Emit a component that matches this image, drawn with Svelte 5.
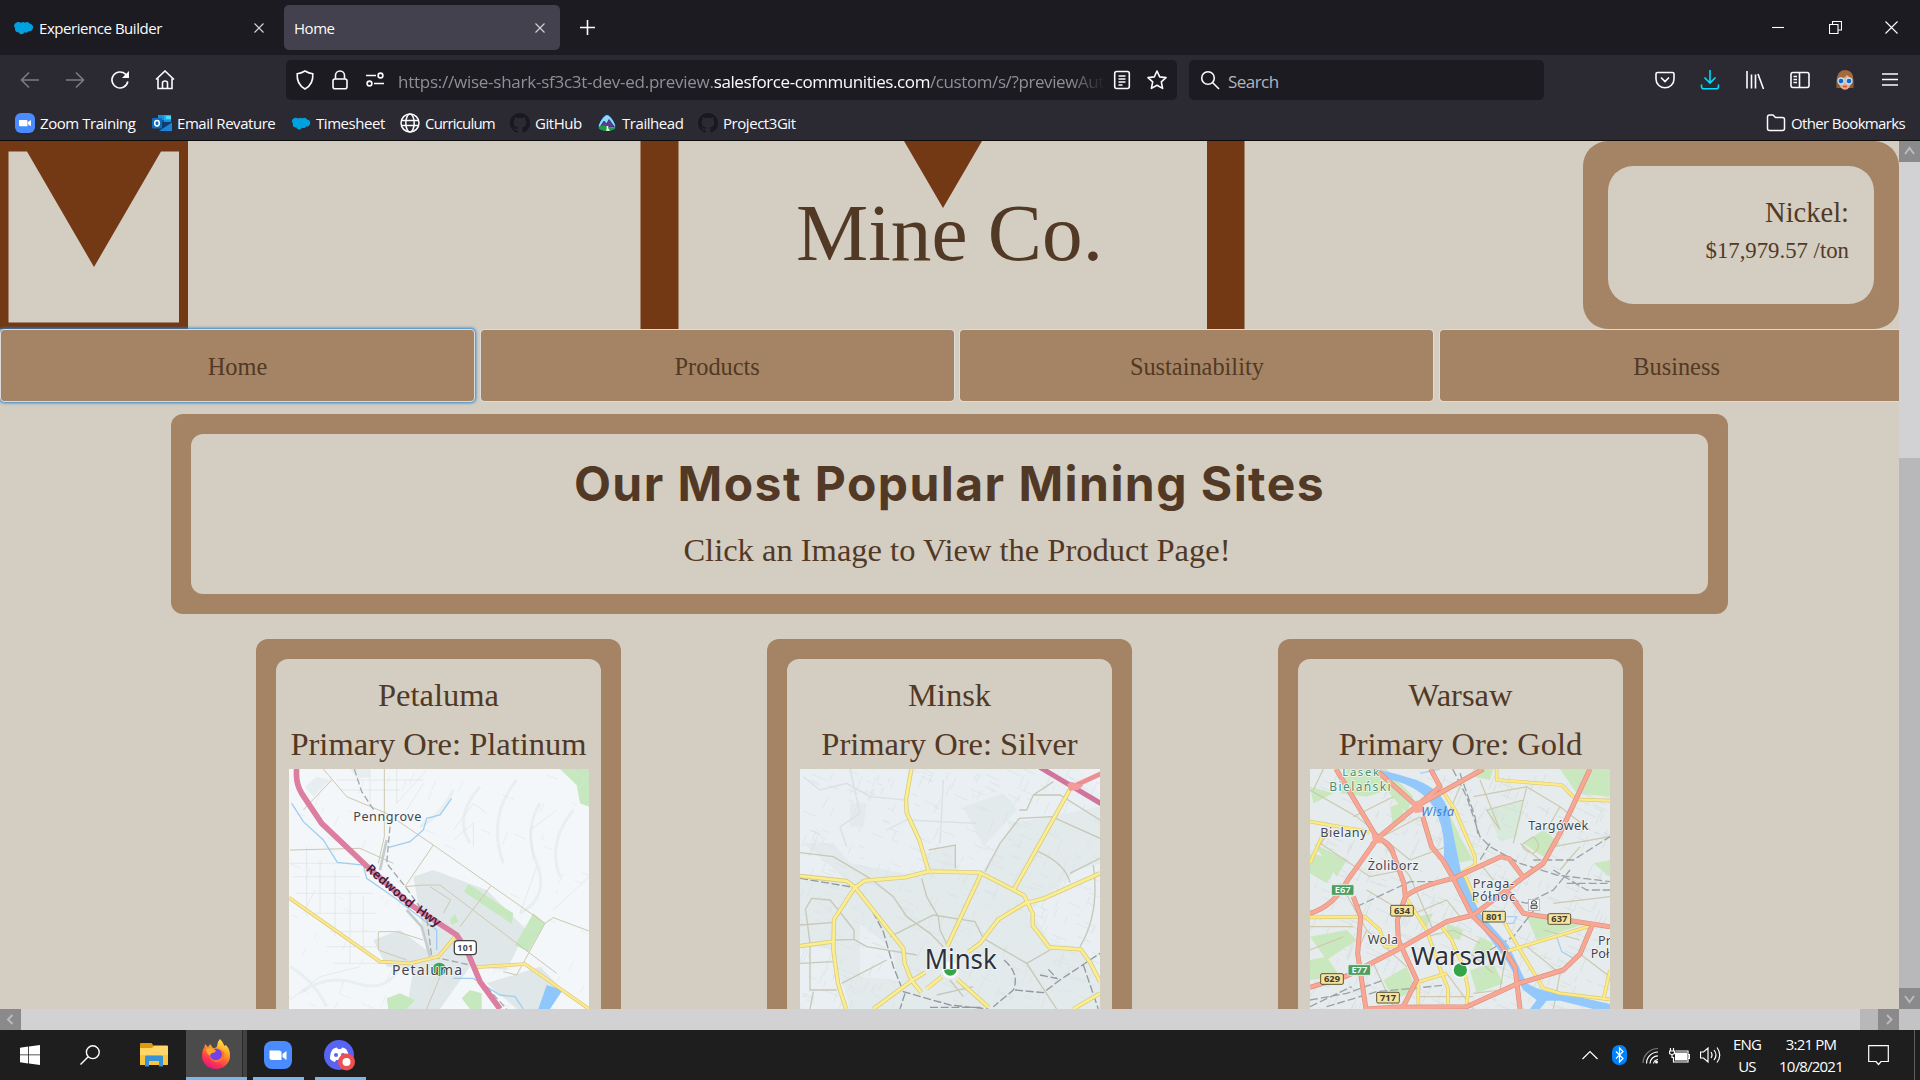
<script>
  const bookmarks = [
    { icon: 'zoom', label: 'Zoom Training' },
    { icon: 'outlook', label: 'Email Revature' },
    { icon: 'cloud', label: 'Timesheet' },
    { icon: 'globe', label: 'Curriculum' },
    { icon: 'github', label: 'GitHub' },
    { icon: 'trail', label: 'Trailhead' },
    { icon: 'github', label: 'Project3Git' },
  ];
  const nav = ['Home', 'Products', 'Sustainability', 'Business'];
  const sites = [
    { name: 'Petaluma', ore: 'Platinum', origin: 147 },
    { name: 'Minsk', ore: 'Silver', origin: 150 },
    { name: 'Warsaw', ore: 'Gold', origin: 150 },
  ];

  // Deterministic street texture: short, slightly irregular segments.
  function streets(seed, count, size) {
    let s = seed;
    const rnd = () => ((s = (s * 16807) % 2147483647) / 2147483647);
    let d = '';
    for (let i = 0; i < count; i++) {
      const x = 147 + rnd() * 900;
      const y = 417 + rnd() * 720;
      const a = rnd() > 0.5 ? 0.4 : 1.97;
      const l = size * (0.4 + rnd());
      d += `M${x.toFixed(0)} ${y.toFixed(0)}l${(Math.cos(a) * l).toFixed(0)} ${(Math.sin(a) * l).toFixed(0)}`;
    }
    return d;
  }

  const minskRoads = [
    'M484 417L468 510L470 548L508 630L536 724L690 728L822 796L848 850L848 886L898 952L992 958L1022 1000L1050 1055',
    'M150 738L290 753L315 772L345 752L465 742L536 724',
    'M315 772L252 868L250 960L264 1060L288 1137',
    'M150 948L252 934',
    'M315 772L460 955L464 1000L485 1052L514 1088',
    'M370 1137L485 1052L525 1028',
    'M693 732L592 948',
    'M655 966L690 940L745 868L825 820L880 806L1050 730',
    'M960 478L792 778',
    'M622 1048L716 1132',
    'M530 1076L576 1040',
    'M970 1137L1050 1090',
  ];
  const warsawRed = [
    'M228 417L352 625L262 752Q220 830 150 850',
    'M345 417L470 528L352 625',
    'M352 625Q395 640 400 672L432 760L436 800L412 870L415 930L470 1050L430 1130L320 1137',
    'M470 528L670 417M512 417L540 470L470 528',
    'M488 560L515 650L548 690L580 745L635 855L720 940L765 1010L780 1137',
    'M436 800Q470 770 580 745L722 680L748 686L790 742L740 780L640 855',
    'M990 417L900 610L850 700L790 742M740 780L790 850L1050 890',
    'M150 1072L260 1038L420 955L560 875L640 855',
    'M280 800L302 860L293 970L318 1137',
    'M1000 878L960 972L910 1020L770 1062L620 1130L420 1132',
  ];
  const warsawYellow = [
    'M150 575L330 606M190 610L150 700',
    'M710 417V450L905 465L948 508L1050 512',
    'M540 470L585 540L645 680V705L610 725L650 820',
    'M150 862L315 860L360 900L375 950H420',
    'M436 800L500 900L545 1030L564 1075V1137',
    'M545 890L575 930L610 1010L625 1080L618 1137',
    'M475 1056L560 1030M475 1056V1137',
    'M740 964L1000 885M735 880L780 960L850 1075L900 1090L1050 1108',
    'M1050 1020L1030 1110',
  ];
</script>

{#snippet cloud()}
  <path fill="#00a1e0" d="M8.3 4.2C9.2 3.2 11 2.8 12.4 4C14 2.5 17 3 17.8 5.4C20.5 5 22 8.3 20.6 10.9C19.6 12.7 18 13.2 16.6 12.8C15.8 14.5 13.6 15 12 14.1C10.8 16.8 6.8 16.7 5.9 13.9C3.2 14.2 1.4 12 2.2 9.7C.2 7.9 1 4.4 3.8 3.6C5.5 3 7.5 3.2 8.3 4.2Z" />
{/snippet}

{#snippet icon(name)}
  {#if name === 'zoom'}
    <svg viewBox="0 0 20 20"><rect width="20" height="20" rx="6" fill="#4a8cff" /><path fill="#fff" d="M4 7h7.2q1.3 0 1.3 1.3V13.300H5.300Q4 13.300 4 12ZM13 9l3-2.100v6.400l-3-2Z" /></svg>
  {:else if name === 'outlook'}
    <svg viewBox="0 0 20 20"><path fill="#1490df" d="M6 2h13v10H6z" /><path fill="#28a8ea" d="M12 2h7v5h-7z" /><path fill="#0a5aa8" d="M6 7h6v5H6z" /><path fill="#50d9ff" d="M14 3h5v3h-5z" /><path fill="#123b6d" d="M6 9l14 0v8H8z" /><path fill="#1a86d9" d="M7 18L20 9.500V18Z" /><rect y="5" width="10" height="10.500" rx="1" fill="#0f6cbd" /><ellipse cx="5" cy="10.200" rx="2.300" ry="2.700" fill="none" stroke="#fff" stroke-width="1.500" /></svg>
  {:else if name === 'cloud'}
    <svg viewBox="0 0 22 18">{@render cloud()}</svg>
  {:else if name === 'globe'}
    <svg viewBox="0 0 20 20" fill="none" stroke="#fbfbfe" stroke-width="1.500"><circle cx="10" cy="10" r="9" /><ellipse cx="10" cy="10" rx="4.200" ry="9" /><path d="M1.500 7.500h17M1.500 12.500h17" /></svg>
  {:else if name === 'github'}
    <svg viewBox="0 0 16 16"><path fill="#191820" d="M8 0C3.580 0 0 3.580 0 8c0 3.540 2.290 6.530 5.470 7.590.4.070.55-.17.55-.38 0-.19-.01-.82-.01-1.490-2.010.37-2.530-.49-2.690-.94-.09-.23-.48-.94-.82-1.130-.28-.15-.68-.52-.01-.53.63-.01 1.080.58 1.230.82.72 1.210 1.870.87 2.330.66.07-.52.28-.87.51-1.070-1.780-.2-3.640-.89-3.640-3.950 0-.87.31-1.590.82-2.150-.08-.2-.36-1.020.08-2.120 0 0 .67-.21 2.200.82a7.600 7.600 0 014 0c1.530-1.040 2.200-.82 2.200-.82.44 1.100.16 1.920.08 2.120.51.56.82 1.270.82 2.150 0 3.070-1.870 3.750-3.650 3.950.29.25.54.73.54 1.480 0 1.070-.01 1.930-.01 2.200 0 .21.15.46.55.38A8 8 0 0016 8c0-4.420-3.580-8-8-8z" /></svg>
  {:else}
    <svg viewBox="0 0 20 20"><path fill="#8fd8f8" stroke="#032d60" d="M10 1.500C13 1.500 19 10 18.800 14Q18 18 10 18T1.200 14C1 10 7 1.500 10 1.500Z" /><path fill="#5c3f92" stroke="#20124d" stroke-width=".6" d="M3 14L7 8l2.500 3L12 6.500 17.500 14Z" /><path fill="#1f9d3a" d="M1.500 14Q6 11.500 10 13.500T18.500 14Q17 18 10 18T1.500 14Z" /><path fill="#fff" d="M9.500 13l2 .3L11 15l2 2.800H9l.8-2.500Z" /></svg>
  {/if}
{/snippet}

{#snippet label(text, x, y, size, len)}
  <text {x} {y} font-size={size} textLength={len}>{text}</text>
{/snippet}

{#snippet shield(text, x, y, kind)}
  <rect class={kind} {x} {y} width="68" height="32" rx="4" />
  <text class="{kind}-text" x={x + 34} y={y + 26} text-anchor="middle">{text}</text>
{/snippet}

<div class="screen">
  <div class="tabs">
    <div class="tab">
      <svg class="fav" viewBox="0 0 22 18">{@render cloud()}</svg>
      <span class="tab-title">Experience Builder</span>
      <svg class="x" viewBox="0 0 10 10"><path d="M.5.500l9 9M9.500.500l-9 9" /></svg>
    </div>
    <div class="tab active">
      <span class="tab-title">Home</span>
      <svg class="x" viewBox="0 0 10 10"><path d="M.5.500l9 9M9.500.500l-9 9" /></svg>
    </div>
    <svg class="plus" viewBox="0 0 15 15"><path d="M7.500 0v15M0 7.500h15" /></svg>
    <div class="window-buttons">
      <svg viewBox="0 0 13 13"><path d="M0 6.500h12" /></svg>
      <svg viewBox="0 0 13 13"><path d="M.5 3.500h8.500v9H.5zM3.500 3.500V.5h9v8.500H9" /></svg>
      <svg viewBox="0 0 13 13"><path d="M.5.500l12 12M12.500.500l-12 12" /></svg>
    </div>
  </div>

  <div class="toolbar">
    <div class="nav-icons">
      <svg class="dim" viewBox="0 0 20 20"><path d="M19 10H1.500M9 2.500L1.500 10 9 17.500" /></svg>
      <svg class="dim" viewBox="0 0 20 20"><path d="M1 10h17.500M11 2.500l7.500 7.500-7.500 7.500" /></svg>
      <svg viewBox="0 0 20 20"><path d="M17.800 11.500A8 8 0 1 1 15.500 4.200L18 6.500" /><path fill="#fbfbfe" stroke="none" d="M19 1v7h-7Z" /></svg>
      <svg viewBox="0 0 20 20"><path d="M1 9.500L10 1l9 8.500M3 8.500V18.500H17V8.500M7.500 18V13q0-2 2.500-2t2.500 2v5" /></svg>
    </div>
    <div class="field url">
      <svg viewBox="0 0 20 20"><path d="M10 1q4 2.300 7.800 2.700c.5 7-1.800 12-7.800 15.300C4 15.700 1.700 10.700 2.200 3.700Q6 3.300 10 1Z" /></svg>
      <svg viewBox="0 0 20 20"><rect x="3" y="9" width="14" height="9.800" rx="2" /><path d="M5.500 9V5.500a4.500 4.500 0 0 1 9 0V9" /></svg>
      <svg viewBox="0 0 20 20"><path d="M1 5.500h10M9 13.500h10" /><circle cx="15.500" cy="5.500" r="2.400" /><circle cx="4.500" cy="13.500" r="2.400" /></svg>
      <div class="address"><span class="u1">https://wise-shark-sf3c3t-dev-ed.preview.</span><b>salesforce-communities.com</b><span>/custom/s/?previewAut</span></div>
      <svg viewBox="0 0 20 20"><rect x="2.700" y="1.500" width="14.600" height="17" rx="2" /><path d="M6.500 6h7M6.500 9h7M6.500 12h7M6.500 15h4" /></svg>
      <svg viewBox="0 0 20 20"><path stroke-linejoin="round" d="M10 1l2.700 5.900 6.300.7-4.700 4.300 1.300 6.500L10 15.200l-5.600 3.200 1.300-6.500L1 7.600l6.300-.7Z" /></svg>
    </div>
    <div class="field search">
      <svg viewBox="0 0 20 20"><circle cx="8" cy="8" r="6.300" /><path d="M12.500 12.500L19 19" /></svg>
      <span>Search</span>
    </div>
    <div class="actions">
      <svg viewBox="0 0 20 20"><path d="M2.500 2.500h15q1.500 0 1.500 1.500v5a9 8.800 0 0 1-18 0V4q0-1.500 1.500-1.500ZM6 7.500l4 4 4-4" /></svg>
      <svg class="download" viewBox="0 0 20 20"><path d="M10 0v12.500M4.500 7.500L10 13l5.500-5.500M1.500 14.500v2q0 2.300 2.300 2.300h12.400q2.300 0 2.300-2.300v-2" /></svg>
      <svg viewBox="0 0 20 20"><path d="M2 1v17.500M6.500 4.500v14M10.500 4.500v14M13 4l5.500 15" /></svg>
      <svg viewBox="0 0 20 20"><rect x="1" y="2.500" width="18" height="15" rx="2" /><path d="M9.500 2.500v15M3.500 6.500H7M3.500 9.500H7M3.500 12.500H7" /></svg>
      <svg viewBox="0 0 20 20"><g stroke="none"><path fill="#8e5b34" d="M1.500 18Q0 0 10 0T18.500 18H14V9H6v9Z" /><ellipse cx="10" cy="12" rx="6" ry="7.800" fill="#f0a887" /><path fill="#a46a3c" d="M2 10Q3 0 11 .5T18 10L12 5Q9 9 2 10Z" /></g><g fill="#1268c8" stroke="#b9e3ff" stroke-width="1.300"><circle cx="6" cy="11" r="3" /><circle cx="14" cy="11" r="3" /></g><path stroke="#c4553c" d="M8 16.500h4" /></svg>
      <svg viewBox="0 0 20 20"><path d="M2 4h16M2 9.500h16M2 15h16" /></svg>
    </div>
  </div>

  <div class="bookmarks">
    {#each bookmarks as b}
      <div class="bookmark {b.icon}">{@render icon(b.icon)}<span>{b.label}</span></div>
    {/each}
    <div class="bookmark other">
      <svg viewBox="0 0 20 20" fill="none" stroke="#fbfbfe" stroke-width="1.500"><path d="M1.500 4q0-2 2-2h3.500l2.500 2.500h7q2 0 2 2V15.500q0 2-2 2H3.500q-2 0-2-2Z" /></svg>
      <span>Other Bookmarks</span>
    </div>
  </div>

  <div class="viewport">
    <main class="page">
      <header>
        <svg class="logo" viewBox="0 0 188 188"><path fill="#733814" d="M0 0h188v188H0z" /><path fill="#d4cdc1" d="M8.500 10.500H27L94 126 161 10.500h18v171H8.500Z" /></svg>
        <div class="hero">
          <svg viewBox="0 0 605 188"><path fill="#733814" d="M.5 0h38v188H.5zM567 0h37.500v188h-37.500zM264 0h78L303 67Z" /></svg>
          <h1>Mine Co.</h1>
        </div>
        <div class="price">
          <div class="price-inner">
            <div class="metal">Nickel:</div>
            <div class="value">$17,979.57 /ton</div>
          </div>
        </div>
      </header>

      <nav>
        {#each nav as item, i}
          <button class:focused={i === 0}>{item}</button>
        {/each}
      </nav>

      <section class="banner">
        <div class="banner-inner">
          <h2>Our Most Popular Mining Sites</h2>
          <p>Click an Image to View the Product Page!</p>
        </div>
      </section>

      <div class="cards">
        {#each sites as site, i}
          <article>
            <div class="card-inner">
              <div>{site.name}</div>
              <div>Primary Ore: {site.ore}</div>
              <svg class="map" viewBox="{site.origin} 417 900 720">
                {#if i === 0}
                  <path fill="#f4f7f9" d="M147 417h900v720H147z" />
                  <path fill="none" stroke="#e9eef1" stroke-width="9" d="M640 480Q600 560 540 590M720 470Q640 560 690 640M830 450Q740 560 790 700M900 520Q850 600 890 700T840 850M1000 540Q920 640 960 740M180 1090Q260 1030 350 1060T480 1010M150 1010Q220 1050 260 1130" />
                  <path fill="#e0e7e9" d="M400 930L480 900L560 960L520 740L580 720L740 780L860 900L800 1020L690 1010L600 1137H500L520 1020L440 1010ZM740 1060L900 1010L960 1070L900 1137H830Z" />
                  <path fill="#e6eef0" d="M190 417h200v25L350 445L330 417ZM230 440L270 450L220 500L195 470Z" />
                  <path fill="#c6e8bf" d="M960 417h87V530L1020 520L1010 465ZM685 762L820 850L815 882L672 785ZM880 850L915 880L865 965L825 945ZM440 1105L480 1090L525 1110L500 1137H445ZM665 1105L690 1080L725 1090V1137H690ZM630 870L645 852L655 875L635 885Z" />
                  <g fill="none" stroke="#dfe2e2" stroke-width="2">
                    <path d="M150 700H330M160 740H360M170 790H400M220 850H410M270 905H410M260 950H415M280 1000H420M200 650V860M240 690V850M285 720V920M330 780V1000M370 800V960M225 780L190 850M290 450H550M300 480H480M390 420V530M470 417V520L560 420M500 540L550 460M640 600L700 520L740 550M700 650V580L640 630M880 690L870 600L950 540M890 710L840 850M940 840L1047 740M150 1110L240 1040L360 1010M560 1137L580 1050L640 1010" />
                    <path d={streets(41, 90, 32)} stroke-width="1.500" />
                  </g>
                  <g fill="none" stroke="#cdc8b2" stroke-width="3">
                    <path d="M250 417L320 500L440 550L580 645L915 880L830 1035L790 1025M433 417V620L415 700M580 645L495 770L550 765L600 765L870 970L950 1030M275 450L190 540M150 660L360 655L460 700M752 768L660 890M915 880L940 863L1047 903M415 905H470L550 930M415 905V960L500 990M570 770L632 810L610 850M560 1137L600 1040" />
                  </g>
                  <path fill="none" stroke="#9fcdf2" stroke-width="4" d="M155 520L190 575L250 630L292 697L370 705L380 745L460 800L590 900V960M446 652L510 635L550 600L560 565L600 555L635 505M640 1045L700 1045L780 1095L825 1100L850 1137" />
                  <path fill="#8dc7fb" d="M920 1065L968 1080L930 1137H895Z" />
                  <path fill="none" stroke="#a3aaab" stroke-width="4" d="M343 417L365 485L405 545M450 590L440 700L500 775L560 860L575 980L690 1005M720 1050L800 1137" stroke-dasharray="20 9" />
                  <path fill="none" stroke="#c5cccb" stroke-width="8" d="M440 630L420 720M500 840L545 890L570 980" />
                  <path fill="none" stroke="#dcc675" stroke-width="11" d="M147 803L420 995L510 1000L595 980L650 915M700 1012L855 1002L1047 1137" />
                  <path fill="none" stroke="#fbe98c" stroke-width="7" d="M147 803L420 995L510 1000L595 980L650 915M700 1012L855 1002L1047 1137" />
                  <path fill="none" stroke="#dd7da0" stroke-width="17" d="M170 417Q166 460 185 490L245 580L380 708L510 823L650 915L680 960L720 1055L780 1137" />
                  <circle cx="598" cy="1018" r="20" fill="#35a853" />
                  <rect x="643" y="932" width="66" height="42" rx="10" fill="#fff" stroke="#444" stroke-width="4" />
                  <text class="route" x="652" y="963" font-size="26" textLength="47">101</text>
                  {@render label('Penngrove', 340, 574, 38, 204)}
                  {@render label('Petaluma', 456, 1034, 42, 210)}
                  <text class="hwy" font-size="38" textLength="176" transform="translate(376 720) rotate(41)">Redwood</text>
                  <text class="hwy" font-size="38" textLength="80" transform="translate(526 846) rotate(35)">Hwy</text>
                {:else if i === 1}
                  <path fill="#e9eff2" d="M150 417h900v720H150z" />
                  <path fill="#e2eaec" d="M160 640L250 640L300 700L520 740L530 670L615 645L620 720L700 720L790 580L1050 530V700L980 720L830 850L990 960L1050 1040V1137H300L250 960L150 940V750L290 750ZM640 530L760 490L800 540L700 650ZM300 520L350 520L340 590L300 590Z" />
                  <path fill="#e9eff2" d="M850 850L980 720L1030 780L990 950L900 940ZM330 880L430 960L440 1050L330 1040Z" />
                  <path fill="#f1f0f7" d="M990 417h60v75Z" />
                  <g fill="none" stroke="#d9e1e3" stroke-width="2">
                    <path d={streets(93, 430, 34)} />
                    <path d="M160 440L210 480L290 460L360 500L470 510M580 450L570 640M300 417L330 550L270 590L290 650M410 600L470 570L680 580" stroke-width="4" />
                  </g>
                  <path fill="none" stroke="#c8c8b8" stroke-width="4" d="M150 668L250 680L360 745L430 800L470 860L540 910L580 950M420 920L500 880L550 855L675 875L700 925L830 1000L920 1137M705 725L750 640L808 565L905 560L1050 625M808 540H830L850 495L910 455M850 495H930L1050 570M515 745L530 800L565 860L570 900L592 945M536 660L616 645V715M865 665Q945 700 960 758M960 730L1050 685M1030 705Q1050 850 990 950M165 840L185 805L240 810L265 840L312 900V928L255 930M312 928L350 950L500 975M167 840L180 940V1080H260M150 885L245 878M830 1000L900 960M275 1060L410 990M560 1095L670 1070M600 1050L640 1100M180 1137L190 1085M150 1000L250 995" />
                  <path fill="none" stroke="#92999e" stroke-width="4" stroke-dasharray="24 8" d="M150 745L310 772L360 830L400 905L430 1010L460 1085L600 1125L715 1137M762 990Q810 1030 790 1080L730 1130M795 1080L880 1088L930 1050L1050 970M1000 1005L1045 1137M465 1090L450 1137M870 1035L920 1045L895 1018M540 1132H700" />
                  <g fill="none" stroke-linejoin="round">
                    {#each minskRoads as d}<path {d} stroke="#d8cc82" stroke-width="13" />{/each}
                    {#each minskRoads as d}<path {d} stroke="#fcee8e" stroke-width="8" />{/each}
                  </g>
                  <path fill="none" stroke="#d0749e" stroke-width="15" d="M870 412L1055 522" />
                  <path fill="none" stroke="#ec8f93" stroke-width="14" d="M968 470L1055 430" />
                  <path fill="#f49a9b" d="M952 462L965 456L1000 466L985 480L958 482Z" />
                  <circle cx="601" cy="1020" r="25" fill="#fff" opacity=".8" />
                  <path fill="#32a648" d="M582 1018h38a19 19 0 1 1-38 0Z" />
                  <text x="524" y="1016" font-size="80" textLength="216" lengthAdjust="spacingAndGlyphs" class="city">Minsk</text>
                {:else}
                  <path fill="#e6ecee" d="M150 417h900v720H150z" />
                  <path fill="#c9e8bd" d="M260 417L380 417L460 500L440 550L380 480L320 500L240 490ZM150 670L240 690L200 760L150 730ZM160 640L260 690L230 740ZM500 480L540 490L600 620L640 690L590 700L570 600ZM900 417H1050V500L950 490ZM790 640L850 600L900 640L850 680ZM800 860L900 870L980 880L830 930ZM150 920L260 900L290 930L200 990ZM630 1020L700 1000L730 1060L650 1090ZM150 990L200 980L240 1040L150 1050ZM560 880L610 900L600 930L560 920ZM390 530L420 520L440 570L400 590ZM660 920L700 940L680 990L640 960ZM640 417H700L690 450L640 440ZM370 1050L440 1010L470 1080L400 1110ZM1000 700L1050 690V740ZM470 860L520 850L500 890ZM220 490L160 520L150 470Z" />
                  <path fill="#d8eadb" d="M680 540L790 510L770 620L720 635Z" />
                  <g fill="none" stroke="#d3dbd9" stroke-width="2"><path d={streets(777, 500, 36)} /></g>
                  <path fill="none" stroke="#cdc8ae" stroke-width="3.500" d="M150 480L290 560L450 690M190 417L160 480M280 560L400 500M330 640L480 560M180 640L330 740L430 720M210 600L150 690M370 640L450 740L520 900M450 690L560 650M600 470L570 540M640 500L800 470L760 640M660 450L720 600L680 540L790 510M800 470L900 530L860 600M780 640L840 690M240 760L320 900L290 970M320 780L420 840M440 860L560 810L600 860M320 900L440 1010M150 960L250 920M340 1000L400 1130M500 920L580 900L660 940M620 960L700 1030M640 1090L720 1080L740 960M800 950L900 1030L880 1137M850 900L960 930M880 650L1050 620M900 720L960 650M820 620Q850 650 820 670Q780 660 790 640ZM700 750L660 700M880 820L1050 800M900 530L990 600M150 890H280M560 1030L640 1137M960 972L1050 1040M480 1100H640" />
                  <path fill="none" stroke="#9aa2a5" stroke-width="4" stroke-dasharray="24 9" d="M578 417L620 500L660 620L690 650L780 700L890 735L1050 755M600 430L645 560L655 620M690 640L660 690M720 800L800 820L880 780L930 720M880 720L980 780H1050M820 690L940 690L1050 620M150 1110L260 1090L370 1050M200 1130L350 1085L560 1065M290 830L450 755H530M690 960L760 920L830 830M920 760H1050M150 1130L275 1070" />
                  <path fill="#92c8fc" d="M345 417Q410 430 470 450Q545 480 565 540L602 720L660 850L745 945L800 1060Q850 1090 930 1095L1050 1122V1137H1000L900 1112L860 1112L840 1137H810L830 1110L790 1080L735 985L640 860L590 770L550 690Q560 600 520 530Q480 470 395 450Z" />
                  <path fill="none" stroke="#a8d0f2" stroke-width="4" d="M480 430L540 417M890 920L905 965L940 985M740 860H770L760 880H730" />
                  <g fill="none" stroke-linejoin="round">
                    {#each warsawYellow as d}<path {d} stroke="#dccb76" stroke-width="11" />{/each}
                    {#each warsawYellow as d}<path {d} stroke="#feea82" stroke-width="7" />{/each}
                    {#each warsawRed as d}<path {d} stroke="#dd8f80" stroke-width="15" />{/each}
                    {#each warsawRed as d}<path {d} stroke="#f8a794" stroke-width="11" />{/each}
                  </g>
                  <path fill="#f8a794" d="M450 515L488 510L492 545L465 550ZM335 615L370 615L365 640L340 640Z" />
                  {@render shield('E67', 214, 764, 'green')}
                  {@render shield('E77', 264, 1004, 'green')}
                  {@render shield('634', 392, 826, 'tan')}
                  {@render shield('801', 668, 844, 'tan')}
                  {@render shield('637', 864, 851, 'tan')}
                  {@render shield('629', 182, 1031, 'tan')}
                  {@render shield('717', 350, 1087, 'tan')}
                  <rect x="805" y="808" width="34" height="34" fill="#f5f7f8" stroke="#aaa" stroke-width="2" />
                  <path fill="none" stroke="#444" stroke-width="3" d="M815 822v-7q7-7 14 0v7ZM813 827h18v8h-18Z" />
                  <g class="park">{@render label('Lasek', 247, 438, 34, 110)}{@render label('Bielański', 208, 484, 36, 184)}</g>
                  <text class="river" x="484" y="559" font-size="37" textLength="98">Wisła</text>
                  {@render label('Bielany', 181, 622, 38, 139)}
                  {@render label('Żoliborz', 323, 719, 38, 152)}
                  {@render label('Targówek', 805, 599, 38, 180)}
                  {@render label('Praga-', 638, 773, 38, 124)}
                  {@render label('Północ', 635, 813, 38, 130)}
                  {@render label('Wola', 323, 941, 38, 91)}
                  <text x="1014" y="946" font-size="38">Pr</text>
                  <text x="992" y="985" font-size="38">Poł</text>
                  <circle cx="601" cy="1020" r="25" fill="#fff" opacity=".7" />
                  <circle cx="601" cy="1020" r="20" fill="#35a647" />
                  <text x="453" y="1005" font-size="76" textLength="286" lengthAdjust="spacingAndGlyphs" class="city">Warsaw</text>
                {/if}
              </svg>
            </div>
          </article>
        {/each}
      </div>
    </main>

    <div class="vscroll">
      <div class="sb"><svg viewBox="0 0 21 21"><path d="M6 13l4.500-6 4.500 6" /></svg></div>
      <div class="vthumb"></div>
      <div class="sb"><svg viewBox="0 0 21 21"><path d="M6 8l4.500 6L15 8" /></svg></div>
    </div>
  </div>
  <div class="hscroll">
    <div class="sb"><svg viewBox="0 0 21 21"><path d="M12.500 6L8 10.500l4.500 4.500" /></svg></div>
    <div class="hthumb"></div>
    <div class="sb"><svg viewBox="0 0 21 21"><path d="M9 6l4.500 4.500L9 15" /></svg></div>
    <div class="corner"></div>
  </div>

  <footer>
    <div class="task start"><svg width="20" height="20" viewBox="0 0 20 20"><path fill="#fff" d="M0 2.800L8.200 1.500V9.500H0ZM9 1.400L20 0V9.500H9ZM0 10.300H8.200V18.500L0 17.200ZM9 10.300H20V20L9 18.500Z" /></svg></div>
    <div class="task find"><svg width="20" height="20" viewBox="0 0 20 20" fill="none" stroke="#fff" stroke-width="1.400"><circle cx="12.800" cy="7.200" r="6.400" /><path d="M8.200 11.800L.5 19.500" /></svg></div>
    <div class="task files"><svg width="28" height="24" viewBox="0 0 28 24"><path fill="#dd9a09" d="M0 1q0-1 1-1h10.500l2 2.500V6H0z" /><path fill="#ffd667" d="M0 5h12l2-2.500h13q1 0 1 1V21q0 1-1 1H1q-1 0-1-1Z" /><path fill="#f8c53c" d="M0 12h28v9q0 1-1 1H1q-1 0-1-1Z" /><path fill="#3793d8" d="M5 23.500V14q0-1.500 1.500-1.500h15Q23 12.500 23 14v9.500h-4V18H9v5.500Z" /></svg></div>
    <div class="task firefox">
      <svg width="30" height="30" viewBox="0 0 30 30">
        <defs><linearGradient id="fx" x1=".8" y1="0" x2=".3" y2="1"><stop offset="0" stop-color="#fff44f" /><stop offset=".4" stop-color="#ff9a22" /><stop offset=".75" stop-color="#ff3750" /><stop offset="1" stop-color="#e31587" /></linearGradient></defs>
        <path fill="url(#fx)" d="M19 0Q22 3 23.500 7L25 6Q29.500 11 29 17A14 13 0 0 1 1 17Q1 11 3.500 8L4 5L7 8Q9 6 9 5L12 9Q16 9 16 7Q16 3 19 0Z" />
        <circle cx="15" cy="16" r="6.500" fill="#7542e5" /><path fill="#ffab2d" d="M5 10Q10 8 15 11.500Q14 14 11 14Q9 15 9 17Q5 14 5 10Z" /><path fill="#ff7139" d="M9 16Q10 22 16 21Q21 20 21 15Q20 11 18 10Q25 12 23 18Q20 24 14 23Q8 21 9 16Z" />
      </svg>
    </div>
    <div class="task app meeting"><svg width="28" height="28" viewBox="0 0 28 28"><rect width="28" height="28" rx="8" fill="#4a8cff" /><path fill="#fff" d="M5.500 9.500H15q2.500 0 2.500 2.500v7H8q-2.500 0-2.500-2.500ZM18.500 13l4-3v9l-4-3Z" /></svg></div>
    <div class="task app discord"><svg width="31" height="31" viewBox="0 0 31 31"><circle cx="15" cy="15" r="15" fill="#5865f2" /><path fill="#fff" d="M6 19Q6 12 9 9Q11 7.500 13 7.500L14 9H17L18 7.500Q20 7.500 22 9Q25 13 25 19Q22 22 20 22L19 20H12L11 22Q9 22 6 19Z" /><circle cx="12" cy="15" r="2" fill="#5865f2" /><circle cx="19" cy="15" r="2" fill="#5865f2" /><circle cx="22.500" cy="22" r="8.500" fill="#ed4f52" /><circle cx="22.500" cy="22" r="4" fill="#fff" /></svg></div>

    <div class="tray">
      <svg width="16" height="10" viewBox="0 0 16 10"><path d="M.5 9L8 1.500 15.500 9" /></svg>
      <svg class="bt" width="15" height="20" viewBox="0 0 15 20"><rect width="15" height="20" rx="7" fill="#0082fc" stroke="none" /><path d="M4 6.500l7 7L7.500 17V3L11 6.500l-7 7" /></svg>
      <svg class="wifi" width="17" height="17" viewBox="0 0 17 17"><path stroke="#777" d="M1 16A15 15 0 0 1 16 1.500" /><path d="M4.500 16.500A11.500 11.500 0 0 1 16 5M8 16.500A8 8 0 0 1 16 8.800M11.500 16.500A5 5 0 0 1 16 12.500" /><circle cx="14.500" cy="15" r="1.500" fill="#fff" stroke="none" /></svg>
      <svg class="battery" width="21" height="15" viewBox="0 0 21 15"><path fill="#fff" stroke="none" d="M6 4.500h12v8H6z" /><path d="M6.500 3h12.500v11H4.500V9M19 6.500h1.500v4H19M1.500 0v3M4.500 0v3M.5 3h5v2.500q-2.500 2-5 0ZM3 6v3.500h2" /></svg>
      <svg class="volume" width="21" height="18" viewBox="0 0 21 18"><path d="M.5 6h3L8 2v14l-4.500-4h-3ZM11 6q2 3 0 6M14 4q4 5 0 10M17 1.500q5.500 7.500 0 15" /></svg>
      <div class="lang">ENG<br />US</div>
      <div class="clock">3:21 PM<br />10/8/2021</div>
      <svg class="notice" width="21" height="21" viewBox="0 0 21 21"><path d="M.7.700h19.600v15.800H13l-2.500 3-2.500-3H.7Z" /></svg>
      <div class="peek"></div>
    </div>
  </footer>
</div>

<style>
  :global(body) { margin: 0; overflow: hidden; }
  .screen { width: 1920px; height: 1080px; display: flex; flex-direction: column; overflow: hidden; font-family: 'Open Sans', 'Noto Sans', sans-serif; color: #fbfbfe; background: #2b2a33; }
  .screen, .screen * { box-sizing: border-box; }
  svg { display: block; flex: none; }

  .tabs { height: 55px; background: #1c1b22; display: flex; align-items: center; }
  .tab { width: 276px; height: 45px; border-radius: 5px; display: flex; align-items: center; padding: 0 15px 0 10px; font-size: 15px; letter-spacing: -0.45px; }
  .tab:first-child { margin-right: 8px; padding: 0 12px 0 13px; }
  .tab.active { background: #42414d; }
  .tab-title { flex: 1; padding-top: 1px; }
  .fav { width: 21px; height: 17px; margin-right: 5px; }
  .x { width: 10px; height: 10px; fill: none; stroke: #d5d5da; stroke-width: 1.1; }
  .plus { width: 15px; height: 15px; margin-left: 20px; fill: none; stroke: #fbfbfe; stroke-width: 1.6; }
  .window-buttons { margin-left: auto; padding-right: 22px; display: flex; gap: 43.500px; }
  .window-buttons svg { width: 13px; height: 13px; fill: none; stroke: #fff; stroke-width: 1.1; }

  .toolbar { height: 50px; padding-left: 20px; display: flex; align-items: center; }
  .toolbar svg { width: 20px; height: 20px; fill: none; stroke: #fbfbfe; stroke-width: 1.6; }
  .nav-icons { display: flex; gap: 25px; width: 266px; }
  .nav-icons svg.dim { stroke: #7d7c84; }
  .field { height: 40px; background: #1c1b22; border-radius: 5px; display: flex; align-items: center; }
  .url { width: 891px; padding: 0 10px 0 9px; gap: 15px; }
  .address { flex: 1; overflow: hidden; white-space: nowrap; font-size: 17px; letter-spacing: -0.4px; color: #8f8f96; margin: 0 -8px 0 -2px; padding-top: 3px; mask-image: linear-gradient(90deg, #000 95%, transparent 100%); }
  .address b { color: #fbfbfe; font-weight: 400; letter-spacing: -0.42px; }
  .u1 { letter-spacing: -0.25px; }
  .search { width: 355px; margin-left: 12px; padding-left: 11px; gap: 8px; font-size: 17px; letter-spacing: -0.55px; color: #b4b4bb; }
  .search span { padding-top: 3px; }
  .actions { margin-left: auto; padding-right: 20px; display: flex; gap: 25px; }
  .actions .download { stroke: #00ddff; }

  .bookmarks { height: 36px; border-bottom: 1px solid #0c0c0d; padding: 0 15px; display: grid; grid-template-columns: 137px 139px 109px 110px 87px 101px 1fr auto; align-items: center; }
  .bookmark { display: flex; align-items: center; gap: 5px; font-size: 15px; letter-spacing: -0.45px; white-space: nowrap; }
  .bookmark svg { width: 20px; height: 20px; }
  .globe { letter-spacing: -0.8px; }
  .other { letter-spacing: -0.65px; }

  .viewport { height: 868px; display: flex; }
  .page { width: 1899px; height: 868px; overflow: hidden; background: #d4cdc1; color: #523925; font-family: 'Liberation Serif', 'Times New Roman', serif; }
  header { height: 188px; display: grid; grid-template-columns: 188px 452px 605px 1fr; }
  .logo { width: 188px; height: 188px; }
  .hero { grid-column: 3; display: grid; }
  .hero > * { grid-area: 1 / 1; }
  .hero svg { width: 605px; height: 188px; }
  h1 { margin: 0; padding-left: 14px; text-align: center; font-weight: 400; font-size: 81.250px; line-height: 185px; }
  .price { width: 316px; height: 188px; justify-self: end; padding: 25px; border-radius: 25px; background: #a48464; }
  .price-inner { height: 138px; border-radius: 25px; background: #d4cdc1; padding: 28px 25px 0 0; text-align: right; }
  .metal { font-size: 28.500px; line-height: 38px; }
  .value { font-size: 22.750px; line-height: 37px; }

  nav { height: 73px; display: flex; gap: 4.700px; width: 1920px; }
  button { width: 475px; flex: none; height: 73px; border: 1px solid #dddbda; border-radius: 4px; background: #a48464; background-clip: padding-box; color: inherit; font: inherit; font-size: 24.375px; padding: 2px 0 0; }
  .focused { box-shadow: 0 0 3px 1px #2a86d0; }

  .banner { width: 1557px; height: 200px; margin: 12px 0 0 171px; padding: 20px; border-radius: 12px; background: #a48464; }
  .banner-inner { height: 160px; border-radius: 12px; background: #d4cdc1; padding-top: 15px; text-align: center; }
  h2 { margin: 0; font-family: Inter, sans-serif; font-weight: 700; font-size: 48px; line-height: 70px; letter-spacing: 1.450px; }
  p { margin: 0; padding-left: 15px; font-size: 32.500px; line-height: 62px; }

  .cards { display: flex; gap: 146px; margin: 25px 0 0 256px; }
  article { width: 365px; height: 420px; padding: 20px; border-radius: 12px; background: #a48464; }
  .card-inner { height: 400px; border-radius: 12px; background: #d4cdc1; padding: 12px 0 0; text-align: center; font-size: 32.500px; line-height: 49px; }
  .map { width: 300px; height: 240px; margin: 0 0 0 13px; overflow: hidden; }
  article:last-child .map { margin-left: 12px; }
  .map text { font-family: 'Noto Sans', sans-serif; fill: #454550; letter-spacing: 0; paint-order: stroke; stroke: #f4f7f8; stroke-width: 5px; stroke-linejoin: round; }
  .map .city { fill: #2e303c; }
  .map .route { stroke: none; font-weight: 700; }
  .map .hwy { fill: #401c38; stroke: none; font-weight: 600; }
  .map .park text { fill: #4a8f70; }
  .map .river { fill: #3f7fd0; font-style: italic; stroke: none; }
  .green { fill: #4f9d62; stroke: #dff0e0; stroke-width: 3; }
  .tan { fill: #f5e3a0; stroke: #5d5636; stroke-width: 3; }
  .map .green-text { fill: #fff; stroke: none; font-size: 28px; font-weight: 600; }
  .map .tan-text { fill: #403d2c; stroke: none; font-size: 28px; font-weight: 700; }

  .vscroll { width: 21px; background: #b8b8ba; }
  .sb { width: 21px; height: 21px; background: #8a898b; }
  .sb svg { width: 21px; height: 21px; fill: none; stroke: #bbbabc; stroke-width: 2; }
  .vthumb { height: 296px; background: #d2d2d4; margin-bottom: 530px; }
  .hscroll { height: 21px; display: flex; background: #b8b8ba; }
  .hthumb { width: 1839px; background: #d2d2d4; margin-right: 18px; }
  .corner { width: 21px; background: #c3c3c5; }

  footer { height: 50px; background: #1e1e1e; display: flex; }
  .task { height: 50px; display: flex; align-items: center; justify-content: center; }
  .start { width: 60px; }
  .find { width: 60px; }
  .files { width: 66px; padding-left: 1px; }
  .firefox { width: 61px; padding-right: 2px; background: linear-gradient(90deg, #4b4b4b 56px, #2a2a2a 56px, #2a2a2a 57px, #414141 57px); border-bottom: 3px solid #76b9ed; margin-right: 6px; padding-top: 1px; }
  .app { width: 51px; border-bottom: 3px solid #76b9ed; margin-right: 11px; }
  .meeting { padding: 2px 2px 0 0; }
  .discord { padding: 3px 2px 0 0; }
  .tray { margin-left: auto; display: flex; align-items: center; font-size: 15px; line-height: 22.500px; letter-spacing: -0.8px; text-align: center; color: #fff; }
  .tray svg { fill: none; stroke: #fff; stroke-width: 1.200; }
  .bt { margin-left: 14px; }
  .wifi { margin-left: 15px; }
  .battery { margin-left: 10px; }
  .volume { margin-left: 10px; }
  .lang { width: 40px; margin-left: 6px; }
  .clock { width: 76px; margin-left: 6px; }
  .notice { margin-left: 19px; }
  .peek { width: 6px; height: 50px; border-left: 1px solid #5d5d5d; margin-left: 25px; }
</style>
